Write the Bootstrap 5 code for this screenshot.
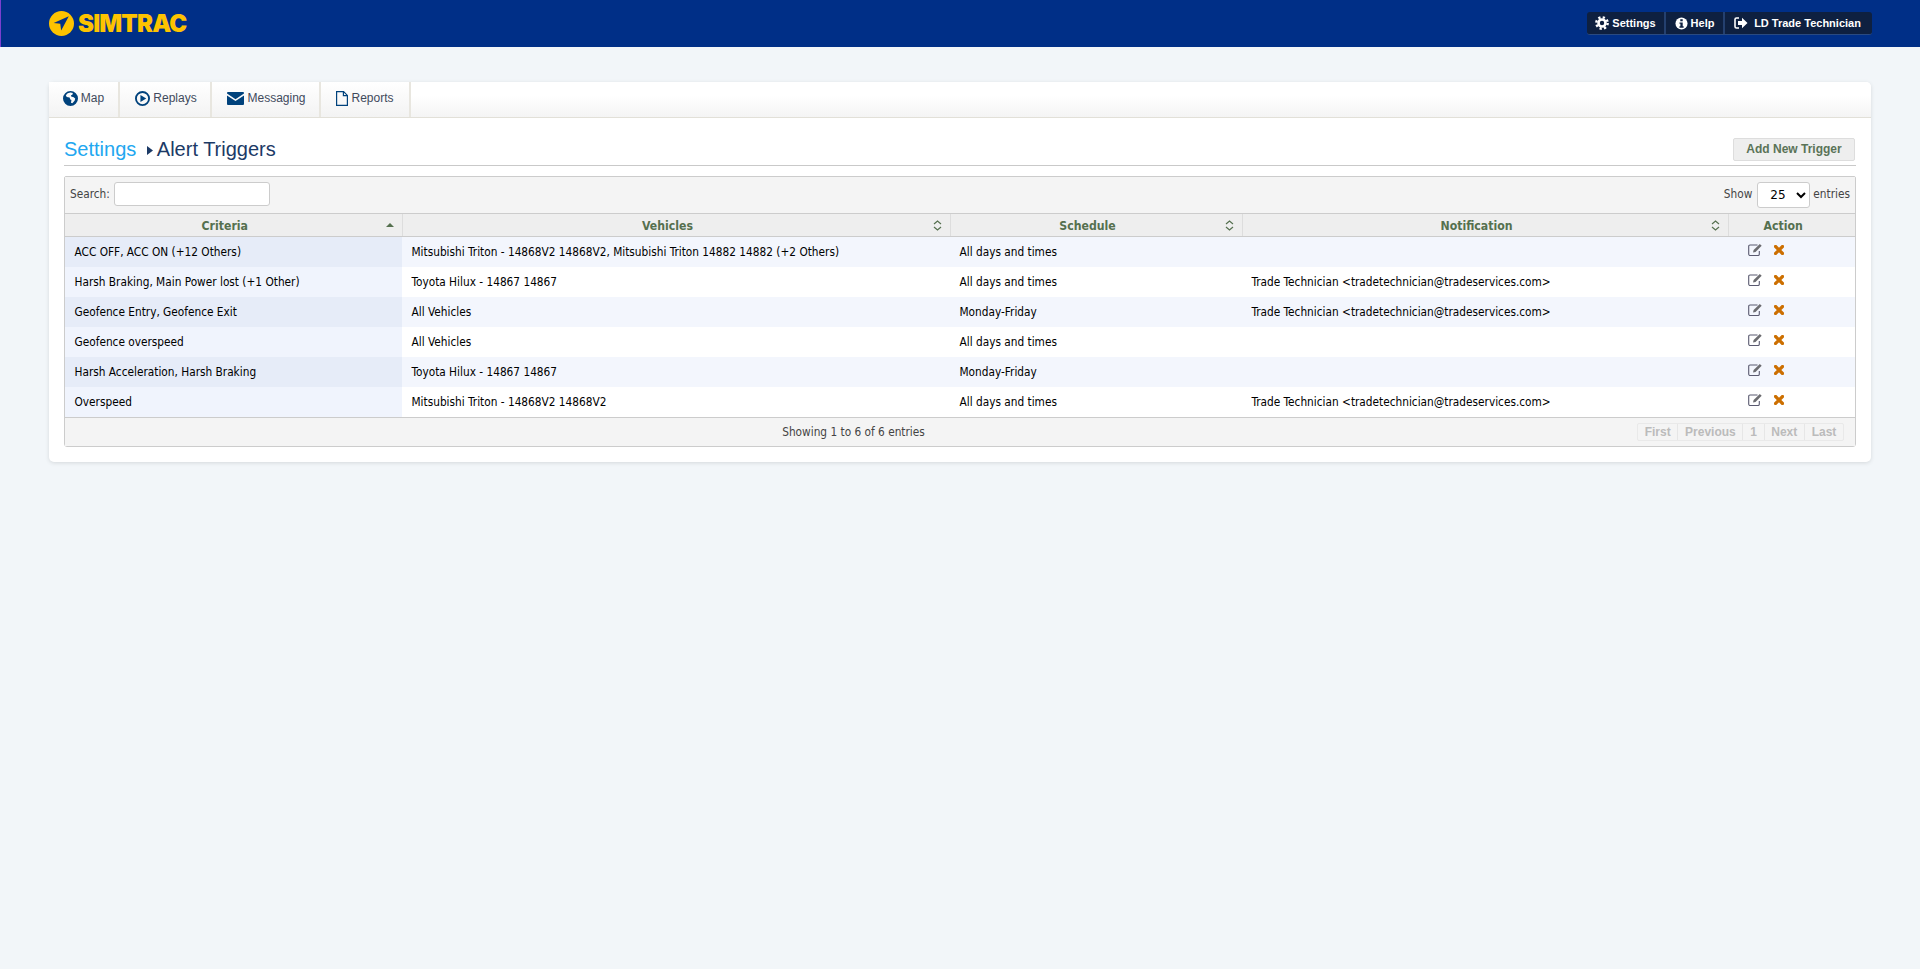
<!DOCTYPE html>
<html lang="en"><head><meta charset="utf-8"><title>Alert Triggers</title>
<link href="https://cdn.jsdelivr.net/npm/bootstrap@5.3.0/dist/css/bootstrap.min.css" rel="stylesheet">
<script src="https://cdn.jsdelivr.net/npm/bootstrap@5.3.0/dist/js/bootstrap.bundle.min.js"></script>
<style>
body{background:#f2f6f9;font-family:"DejaVu Sans",sans-serif;font-size:12px;color:#000;min-height:969px}
.topbar{height:47px;background:#002f87;border-left:1px solid #7a3fd0;padding:0 48px 0 48px}
.brand{color:#fdc300;font-family:Inter,sans-serif;font-weight:900;font-size:24px;line-height:1;gap:4px;text-decoration:none;letter-spacing:-.85px}
.userbar{background:#0e2040;border-bottom:1px solid #2a4a80;border-radius:3px;height:23px;font:bold 11px "Liberation Sans",sans-serif;color:#fff}
.userbar a{color:#fff;text-decoration:none;height:100%;border-right:2px solid #24406f;gap:3px}
.userbar a:last-child{border-right:0}
.panelbox{margin:34.5px 49px 0 49px;border-radius:5px;border:0;box-shadow:0 1px 4px rgba(0,0,0,.12);height:380.5px}
.tabstrip{height:36px;background:linear-gradient(#fff 0,#fff 40%,#f4f4f4 100%);border-bottom:1px solid #e2e0d8;border-radius:5px 5px 0 0}
.tabstrip a{font:12px "Liberation Sans",sans-serif;color:#3f4a5c;text-decoration:none;border-right:2px solid #e8e6df;height:100%;gap:3px;background:linear-gradient(#fff,#f3f3f3);padding-bottom:2px}
.tabicon{fill:#00427c}
.pagehead{margin:15px 15px 0 15px;height:33px;border-bottom:1px solid #c9c9c9}
.pagetitle{font:20px "Liberation Sans",sans-serif;color:#1c3a66;line-height:30px;padding-top:1.5px}
.pagetitle a{color:#22a7f0;text-decoration:none}
.titlesep{margin:0 4px 0 5px}
.addbtn{font:bold 12px "Liberation Sans",sans-serif;color:#5a7357;background:#eee;border:1px solid #ddd;border-radius:2px;height:23px;width:122px;padding:0;margin-top:5px;margin-right:1px}
.gridwrap{margin:10px 15px 0 15px;border:1px solid #ccc;border-radius:2px 2px 3px 3px;font-size:11.75px;font-stretch:condensed}
.gridtool{height:37px;background:#f4f4f4;border-bottom:1px solid #ccc;padding:0 5px;color:#444}
.searchbox{width:156px;height:24px;border:1px solid #ccc;border-radius:3px;background:#fff;margin:0 0 2px 4px}
.sizepick{width:53px;height:26px;border:1px solid #ccc;border-radius:3px;background:#fff;margin:0 3px 0 5px;font:12px "DejaVu Sans",sans-serif;color:#000;padding:0 0 0 8px}
.alerttable{table-layout:fixed;margin:0;width:100%}
.alerttable th{background:#eee;color:#55704f;font-weight:bold;font-size:12.2px;text-align:center;height:23px;padding:2px 27px 0 10px;border-right:1px solid #ddd;border-bottom:1px solid #ccc;position:relative;box-shadow:none;vertical-align:middle}
.alerttable th:last-child{border-right:0}
.sorticon{position:absolute;right:8px;top:6px}
.alerttable td{height:30px;padding:3px 9.5px 0;border:0;vertical-align:middle;box-shadow:none;background:#fff;color:#000}
.alerttable tr:nth-child(odd) td{background:#f3f6fd}
.alerttable tr td:first-child{background:#f0f4fd}
.alerttable tr:nth-child(odd) td:first-child{background:#e6ecf8}
.alerttable td.actcell{white-space:nowrap;padding:0 0 3px 20px}
.actcell svg+svg{margin-left:11px}
.gridfoot{height:29px;background:#f4f4f4;border-top:1px solid #ccc;padding:0 11px 0 5px;color:#444}
.pagerbox{border:1px solid #e9e9e9;border-radius:2px;font:bold 12px "Liberation Sans",sans-serif;color:#bbb;height:18px}
.pagerbox span{padding:0 6.7px;border-right:1px solid #e6e6e6;line-height:16px}
.pagerbox span:last-child{border-right:0}
.footinfo{flex:1;text-align:center;padding-top:3px}
</style></head>
<body>
<nav class="topbar d-flex align-items-center justify-content-between">
  <a class="brand d-flex align-items-center" href="#">
    <svg width="25" height="25" viewBox="0 0 24 24"><circle cx="12" cy="12" r="12" fill="#fdc300"/><path d="M19 5 4.500 11.500l6.300.7.900 6.500z" fill="#002f87"/></svg>
    <span>SIMTRAC</span>
  </a>
  <div class="userbar d-flex align-items-center">
    <a href="#" class="d-flex align-items-center justify-content-center" style="width:79px">
      <svg width="14" height="14" viewBox="0 0 14 14"><circle cx="7" cy="7" r="3.500" fill="none" stroke="#fff" stroke-width="2.600"/><circle cx="7" cy="7" r="5.700" fill="none" stroke="#fff" stroke-width="2.400" stroke-dasharray="2.240 2.240"/></svg>Settings</a>
    <a href="#" class="d-flex align-items-center justify-content-center" style="width:59px">
      <svg width="13" height="13" viewBox="0 0 14 14"><circle cx="7" cy="7" r="6.500" fill="#fff"/><rect x="5.700" y="2.400" width="2.600" height="2.200" fill="#0e2040"/><path d="M4.800 5.800h3.500v4.200h1v1.500H4.800V10h1V7.300h-1z" fill="#0e2040"/></svg>Help</a>
    <a href="#" class="d-flex align-items-center justify-content-center" style="width:147px;padding-right:2px">
      <svg width="14" height="12" viewBox="0 0 14 12"><path d="M5 1H2.500A1.500 1.500 0 0 0 1 2.500v7A1.500 1.500 0 0 0 2.500 11H5" fill="none" stroke="#fff" stroke-width="1.600"/><path d="M8 .8 13.500 6 8 11.200V8H4V4h4z" fill="#fff"/></svg>&nbsp;LD Trade Technician</a>
  </div>
</nav>

<main class="card panelbox">
  <div class="tabstrip d-flex">
    <a href="#" class="d-flex align-items-center justify-content-center" style="width:71px"><svg class="tabicon" width="15" height="15" viewBox="0 0 16 16"><path fill-rule="evenodd" d="M8 0a8 8 0 1 1 0 16A8 8 0 0 1 8 0zM5 2.500 3 4.500l1 2 3 .5.800 2 1.200.5-.5 3 1.500.5 2.500-3 .5-2-2-1.500-2-.5-.5-1.500 1.500-.5.500-2L8 1.500z"/></svg>Map</a>
    <a href="#" class="d-flex align-items-center justify-content-center" style="width:92px;padding-left:2px"><svg class="tabicon" width="15" height="15" viewBox="0 0 16 16"><path fill-rule="evenodd" d="M8 0a8 8 0 1 1 0 16A8 8 0 0 1 8 0zm0 2a6 6 0 1 0 0 12A6 6 0 0 0 8 2z"/><path d="M5.800 4.200 12 8l-6.200 3.800z"/></svg>Replays</a>
    <a href="#" class="d-flex align-items-center justify-content-center" style="width:109px;padding-left:2px"><svg class="tabicon" width="17" height="13" viewBox="0 0 17 13"><path d="M1 0h15a1 1 0 0 1 1 1v.6L8.500 7.300 0 1.600V1a1 1 0 0 1 1-1z"/><path d="M0 3.400 8.500 9 17 3.400V12a1 1 0 0 1-1 1H1a1 1 0 0 1-1-1z"/></svg>Messaging</a>
    <a href="#" class="d-flex align-items-center justify-content-center" style="width:90px"><svg width="12" height="15" viewBox="0 0 12 15"><path d="M.6.600h7l3.800 3.800v10H.6zM7.400.600v4h4" fill="none" stroke="#00427c" stroke-width="1.200"/></svg>Reports</a>
  </div>
  <div class="pagehead d-flex justify-content-between">
    <div class="pagetitle"><a href="#">Settings</a> <svg width="6" height="9" viewBox="0 0 6 9" class="titlesep"><path d="M0 0l6 4.500L0 9z" fill="#1c3a66"/></svg>Alert Triggers</div>
    <button class="btn addbtn" type="button">Add New Trigger</button>
  </div>
  <div class="gridwrap">
    <div class="gridtool d-flex align-items-center justify-content-between">
      <label class="d-flex align-items-center">Search:<input class="searchbox" type="text" aria-label="Search"></label>
      <label class="d-flex align-items-center">Show<select class="sizepick" aria-label="Entries"><option>25</option></select>entries</label>
    </div>
    <table class="table alerttable">
      <colgroup><col style="width:337px"><col style="width:548px"><col style="width:292px"><col style="width:486px"><col></colgroup>
      <thead><tr>
        <th>Criteria<svg class="sorticon" width="8" height="10" viewBox="0 0 8 10"><path d="M0 7l4-4 4 4z" fill="#55704f"/></svg></th>
        <th>Vehicles<svg class="sorticon" width="9" height="11" viewBox="0 0 9 11"><path d="M1 4l3.500-3L8 4M1 7l3.500 3L8 7" fill="none" stroke="#55704f" stroke-width="1.200"/></svg></th>
        <th>Schedule<svg class="sorticon" width="9" height="11" viewBox="0 0 9 11"><path d="M1 4l3.500-3L8 4M1 7l3.500 3L8 7" fill="none" stroke="#55704f" stroke-width="1.200"/></svg></th>
        <th>Notification<svg class="sorticon" width="9" height="11" viewBox="0 0 9 11"><path d="M1 4l3.500-3L8 4M1 7l3.500 3L8 7" fill="none" stroke="#55704f" stroke-width="1.200"/></svg></th>
        <th>Action</th>
      </tr></thead>
      <tbody id="rows"></tbody>
    </table>
    <div class="gridfoot d-flex align-items-center">
      <div class="footinfo">Showing 1 to 6 of 6 entries</div>
      <div class="pagerbox d-flex"><span>First</span><span>Previous</span><span>1</span><span>Next</span><span>Last</span></div>
    </div>
  </div>
</main>
<script>
const data=[
["ACC OFF, ACC ON (+12 Others)","Mitsubishi Triton - 14868V2 14868V2, Mitsubishi Triton 14882 14882 (+2 Others)","All days and times",""],
["Harsh Braking, Main Power lost (+1 Other)","Toyota Hilux - 14867 14867","All days and times","Trade Technician <tradetechnician@tradeservices.com>"],
["Geofence Entry, Geofence Exit","All Vehicles","Monday-Friday","Trade Technician <tradetechnician@tradeservices.com>"],
["Geofence overspeed","All Vehicles","All days and times",""],
["Harsh Acceleration, Harsh Braking","Toyota Hilux - 14867 14867","Monday-Friday",""],
["Overspeed","Mitsubishi Triton - 14868V2 14868V2","All days and times","Trade Technician <tradetechnician@tradeservices.com>"]];
const act='<svg width="15" height="13" viewBox="0 0 15 13"><path d="M9.500 2H2a1.300 1.300 0 0 0-1.300 1.300v8A1.300 1.300 0 0 0 2 12.500h8a1.300 1.300 0 0 0 1.300-1.300V8" fill="none" stroke="#5a5a70" stroke-width="1.100"/><path d="M5 9.500l.6-2.500L11.800.9l1.900 1.900-6.200 6.100z" fill="#6c6c70"/></svg><svg width="10" height="10" viewBox="0 0 10 10"><path d="M1.500 1.500l7 7M8.500 1.500l-7 7" stroke="#cc6f00" stroke-width="3.200" stroke-linecap="square"/></svg>';
const tb=document.getElementById('rows');
for(const r of data){const tr=document.createElement('tr');for(const c of r){const td=document.createElement('td');td.textContent=c;tr.appendChild(td)}const a=document.createElement('td');a.className='actcell';a.innerHTML=act;tr.appendChild(a);tb.appendChild(tr)}
</script>
</body></html>
